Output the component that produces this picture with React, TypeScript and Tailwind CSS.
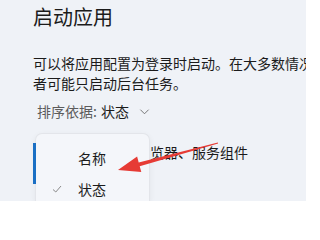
import React from 'react';

const font = { fontFamily: '"Noto Sans CJK SC", "Noto Sans", sans-serif' };

export default function App() {
  return (
    <div className="relative w-[306px] h-[201px] overflow-hidden bg-[#eff2f7] text-[#1b1b1b]" style={font}>
      <div className="pl-[33px] pt-[3px]">
        <h1 className="text-[20px] leading-[28px] font-normal">启动应用</h1>

        <div className="mt-[22px] w-[273px] overflow-hidden text-[14px] leading-[20px] whitespace-nowrap">
          <p>可以将应用配置为登录时启动。在大多数情况</p>
          <p>者可能只启动后台任务。</p>
        </div>

        <div className="mt-[8px] pl-[4px] flex items-center text-[14px] leading-[20px]">
          <span className="text-[#5c5c5c]">排序依据:</span>
          <span className="ml-[4px]">状态</span>
          <svg className="ml-[10px] w-[11px] h-[11px] text-[#6b6b6b]" viewBox="0 0 12 12" fill="none" stroke="currentColor" strokeWidth="1">
            <path d="M1.5 4 L6 8.5 L10.5 4" />
          </svg>
        </div>

        <div className="mt-[21px] pl-[117px] text-[14px] leading-[20px] whitespace-nowrap">
          览器、服务组件
        </div>
      </div>

      {/* Sort menu */}
      <div className="absolute left-[35px] top-[133px] w-[115px] h-[68px] rounded-t-[7px] border border-b-0 border-[#e3e5ea] bg-[#f4f6fa] shadow-[0_2px_6px_rgba(0,0,0,0.06)]">
        <div className="flex flex-col pt-[8px] text-[14px] leading-[20px]">
          <div className="h-[31px] flex items-center pl-[42px]">名称</div>
          <div className="h-[31px] flex items-center">
            <svg className="ml-[16px] w-[10px] h-[10px] text-[#8a8a8a]" viewBox="0 0 10 10" fill="none" stroke="currentColor" strokeWidth="1">
              <path d="M1 5.5 L3.8 8 L9 2" />
            </svg>
            <span className="ml-[16px]">状态</span>
          </div>
        </div>
      </div>
      <div className="absolute left-[33px] top-[143px] w-[3px] h-[41px] bg-[#1a6fc4]" />

      {/* Red annotation arrow */}
      <svg className="absolute inset-0 pointer-events-none" width="306" height="201" viewBox="0 0 306 201">
        <polygon
          points="118,170 137.1,156.6 138.7,162.4 217.9,142.5 218.1,143.5 139.7,166.2 141.3,172"
          fill="#e63b35"
        />
      </svg>
    </div>
  );
}
